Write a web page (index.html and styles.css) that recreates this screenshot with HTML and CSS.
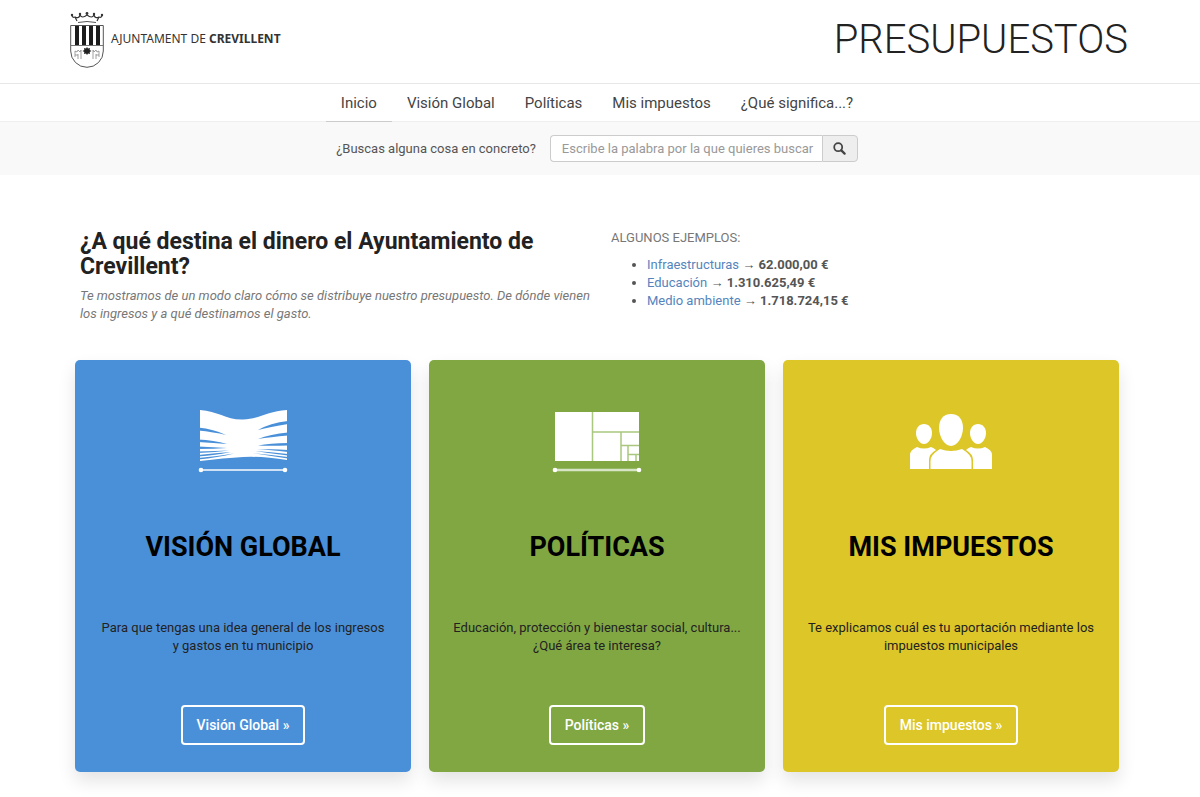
FILE: index.html
```html
<!doctype html>
<html lang="es">
  <head>
    <meta charset="UTF-8" />
    <meta name="viewport" content="width=device-width, initial-scale=1.0" />
    <title>Presupuestos | Ajuntament de Crevillent</title>
    <link rel="stylesheet" href="styles.css">
  </head>

  <body>
    <header>
      <div class="container header-inner">
        <a class="logo" href="#">
          <svg class="shield" viewBox="0 0 34 56" aria-hidden="true">
            <!-- corona -->
            <path d="M7 9 L5 5 Q3 6 2 4 M5 5 Q9 7 10 3 Q12 7 17 3 Q22 7 24 3 Q25 7 29 5 Q31 6 32 4 M29 5 L27 9" fill="none" stroke="#333" stroke-width="1.2" />
            <path d="M8 10.500 Q17 8.500 26 10.500" fill="none" stroke="#555" />
            <g fill="#333">
              <circle cx="2" cy="3" r="1.2" />
              <circle cx="10" cy="2" r="1.2" />
              <circle cx="17" cy="1.5" r="1.4" />
              <circle cx="24" cy="2" r="1.2" />
              <circle cx="32" cy="3" r="1.2" />
            </g>
            <!-- escudo -->
            <path d="M.7 13.5 H33.3 V39 A16.3 16.3 0 0 1 .7 39 Z" fill="#fff" stroke="#555" />
            <path d="M1 33.5 H33" stroke="#777" />
            <path d="M5 14h4v19H5z M12 14h4v19h-4z M19 14h4v19h-4z M26 14h4v19h-4z" fill="#1c1c1c" />
            <path d="M17 35 l1 1.5 2-.6 -.3 2 1.8 1 -1.8 1 .3 2 -2-.5 -1 1.5 -1-1.5 -2 .5 .3-2 -1.8-1 1.8-1 -.3-2 2 .6z" fill="#222" />
            <path d="M5 45 V39 L7 40 L8 38 L10 40 L11 38 V47 M8 47 V42 M5 43 H8 M23 47 V38 L24 40 L26 38 L27 40 L29 39 V45 M26 47 V42 M26 43 H29" fill="none" stroke="#888" stroke-width=".8" />
          </svg>
          <span class="logo-text">AJUNTAMENT DE <b>CREVILLENT</b></span>
        </a>
        <h1 class="site-title">PRESUPUESTOS</h1>
      </div>
    </header>

    <nav class="main-nav">
      <ul class="container">
        <li><a class="active" href="#">Inicio</a></li>
        <li><a href="#">Visión Global</a></li>
        <li><a href="#">Políticas</a></li>
        <li><a href="#">Mis impuestos</a></li>
        <li><a href="#">¿Qué significa...?</a></li>
      </ul>
    </nav>

    <div class="search-bar">
      <form class="container">
        <label for="search">¿Buscas alguna cosa en concreto?</label>
        <div class="input-group">
          <input id="search" type="text" placeholder="Escribe la palabra por la que quieres buscar" />
          <button type="submit" aria-label="Buscar">
            <svg viewBox="0 0 14 14" aria-hidden="true">
              <circle cx="5.6" cy="5.6" r="4.3" fill="none" stroke="#444" stroke-width="1.9" />
              <path d="M9 9 L12.5 12.5" stroke="#444" stroke-width="2.4" stroke-linecap="round" />
            </svg>
          </button>
        </div>
      </form>
    </div>

    <main>
      <div class="container">
        <section class="intro">
          <div class="intro-text">
            <h2>¿A qué destina el dinero el Ayuntamiento de Crevillent?</h2>
            <p>Te mostramos de un modo claro cómo se distribuye nuestro presupuesto. De dónde vienen los ingresos y a qué destinamos el gasto.</p>
          </div>
          <div class="examples">
            <h3>ALGUNOS EJEMPLOS:</h3>
            <ul>
              <li><a href="#">Infraestructuras</a> <span class="arrow">→</span> <b>62.000,00 €</b></li>
              <li><a href="#">Educación</a> <span class="arrow">→</span> <b>1.310.625,49 €</b></li>
              <li><a href="#">Medio ambiente</a> <span class="arrow">→</span> <b>1.718.724,15 €</b></li>
            </ul>
          </div>
        </section>

        <section class="cards">
          <article class="card blue">
            <svg viewBox="0 0 90 64" aria-hidden="true">
              <path d="M2 0 C20 1 28 10 45 9.500 S70 1 89 0 V50 Q64 46 45 47 Q26 48 2 51 Z" fill="#fff" />
              <!-- separación entre las hojas -->
              <g fill="#4a90d9">
                <path d="M0 17.500 Q16 19 28 25 Q16 22 0 20.500 Z" />
                <path d="M0 29.500 Q16 30 29 34 Q16 33 0 32 Z" />
                <path d="M0 36.500 Q16 37 29 38 Q16 39 0 39 Z" />
                <path d="M0 41.500 Q18 41 31 40.500 Q18 42 0 43 Z" />
                <path d="M0 45 Q18 43 33 42 Q18 45 0 46.500 Z" />
                <path d="M0 48 Q20 46 36 43.500 Q20 47.500 0 49.500 Z" />
                <path d="M90 11 Q72 13 60 20 Q72 17 90 14 Z" />
                <path d="M90 22.500 Q72 24 60 29 Q72 27 90 25.500 Z" />
                <path d="M90 33 Q72 33 60 35.500 Q72 36 90 35.500 Z" />
                <path d="M90 40 Q72 39 59 39 Q72 40 90 42 Z" />
                <path d="M90 44 Q72 42 57 41 Q72 43.500 90 45.500 Z" />
                <path d="M90 47 Q72 44.500 54 43 Q72 46 90 48.500 Z" />
              </g>
              <path d="M3 60 H88" stroke="#cfe1f5" stroke-width="2" />
              <circle cx="3" cy="60" r="2.300" fill="#fff" />
              <circle cx="87" cy="60" r="2.300" fill="#fff" />
            </svg>
            <h2>VISIÓN GLOBAL</h2>
            <p>Para que tengas una idea general de los ingresos y gastos en tu municipio</p>
            <a class="btn" href="#">Visión Global »</a>
          </article>

          <article class="card green">
            <svg viewBox="0 0 90 64" aria-hidden="true">
              <path d="M3 2 H87 V51 H3 Z" fill="#fff" />
              <path d="M40.500 2 V51 M41 22 H87 M69 22 V51 M69 35.500 H87 M76 36 V51 M76 44.500 H87 M84 45 V51" fill="none" stroke="#a9c77e" stroke-width="1.500" />
              <path d="M3 60 H87" stroke="#d7e5c6" stroke-width="2.500" />
              <circle cx="3" cy="60" r="2.300" fill="#fff" />
              <circle cx="87" cy="60" r="2.300" fill="#fff" />
            </svg>
            <h2>POLÍTICAS</h2>
            <p>Educación, protección y bienestar social, cultura... ¿Qué área te interesa?</p>
            <a class="btn" href="#">Políticas »</a>
          </article>

          <article class="card yellow">
            <svg viewBox="0 0 90 64" aria-hidden="true">
              <g fill="#fff">
                <path d="M18 14 C23 14 26 18 26 23 C26 29 22 34 18 34 S10 29 10 23 C10 18 13 14 18 14 Z" />
                <path d="M72 14 C77 14 80 18 80 23 C80 29 76 34 72 34 S64 29 64 23 C64 18 67 14 72 14 Z" />
                <path d="M4 59 V45 Q4 40 11 37 Q18 40 25 37 Q28 38 30 40 Q23 44 23 50 V59 Z" />
                <path d="M86 59 V45 Q86 40 79 37 Q72 40 65 37 Q62 38 60 40 Q67 44 67 50 V59 Z" />
                <path d="M45 4 C53 4 57 10 57 18 C57 27 51 36 45 36 S33 27 33 18 C33 10 37 4 45 4 Z" />
                <path d="M24.500 59 V51 Q24 45 34 39 Q45 43 56 39 Q66 45 65.500 51 V59 Z" />
              </g>
            </svg>
            <h2>MIS IMPUESTOS</h2>
            <p>Te explicamos cuál es tu aportación mediante los impuestos municipales</p>
            <a class="btn" href="#">Mis impuestos »</a>
          </article>
        </section>
      </div>
    </main>
  </body>
</html>
```

FILE: styles.css
```css
* {
  box-sizing: border-box;
}
:root {
  --text: #555;
  --line: #e7e7e7;
  --link: #5584bd;
}
body {
  margin: 0;
  background-color: #fff;
  color: var(--text);
  font-family: Roboto, "Liberation Sans", sans-serif;
  font-size: 13px;
  line-height: 18px;
}
h1,
h2,
h3,
p,
ul {
  margin: 0;
  padding: 0;
}
a {
  color: var(--link);
  text-decoration: none;
}
header,
.main-nav,
.search-bar,
main {
  padding-right: 6px;
}
.container {
  max-width: 1062px;
  margin: 0 auto;
}

/* cabecera */
.header-inner {
  display: flex;
  align-items: center;
  justify-content: space-between;
  height: 83px;
  padding: 0 0 3px 4px;
}
.logo {
  display: flex;
  align-items: center;
  gap: 7px;
  color: #333;
  font-family: "Noto Sans", sans-serif;
  font-size: 12px;
}
.logo-text {
  padding-bottom: 3px;
}
.shield {
  width: 34px;
  height: 56px;
}
.site-title {
  color: #222;
  font-size: 40px;
  font-weight: 300;
  line-height: 48px;
}

/* menú */
.main-nav {
  border-top: 1px solid var(--line);
  box-shadow: inset 0 -1px #efefef;
}
.main-nav ul {
  display: flex;
  justify-content: center;
  list-style: none;
}
.main-nav a {
  display: block;
  padding: 9px 15px 8px;
  border-bottom: 1px solid transparent;
  color: #444;
  font-size: 15px;
  line-height: 20px;
}
.main-nav a.active {
  border-bottom-color: #ccc;
}

/* buscador */
.search-bar {
  background-color: #f9f9f9;
}
.search-bar form {
  display: flex;
  align-items: center;
  justify-content: center;
  gap: 14px;
  padding: 13px 0;
}
.input-group {
  display: flex;
  width: 308px;
  height: 27px;
}
.input-group input {
  flex: 1;
  min-width: 0;
  padding: 0 4px 0 11px;
  border: 1px solid #ccc;
  border-right: 0;
  border-radius: 4px 0 0 4px;
  background-color: #fff;
  font: inherit;
}
.input-group input::placeholder {
  color: #999;
}
.input-group button {
  display: flex;
  align-items: center;
  justify-content: center;
  width: 36px;
  padding: 0;
  border: 1px solid #ccc;
  border-radius: 0 4px 4px 0;
  background-color: #eee;
  cursor: pointer;
}
.input-group svg {
  width: 13px;
  height: 13px;
}

/* introducción */
.intro {
  display: grid;
  grid-template-columns: 1fr 1fr;
  padding: 54px 0 37px;
}
.intro-text {
  padding-left: 14px;
}
.intro-text h2 {
  margin-bottom: 8px;
  color: #222;
  font-size: 23px;
  line-height: 25px;
}
.intro-text p {
  color: #777;
  font-style: italic;
}
.examples {
  padding-left: 14px;
}
.examples h3 {
  margin-bottom: 9px;
  color: #777;
  font-size: 13px;
  font-weight: 400;
}
.examples ul {
  padding-left: 36px;
}
.arrow {
  font-family: "Liberation Sans", sans-serif;
}

/* tarjetas */
.cards {
  display: grid;
  grid-template-columns: repeat(3, 1fr);
  gap: 18px;
  padding: 0 9px 25px;
}
.card {
  display: flex;
  flex-direction: column;
  align-items: center;
  padding: 50px 23px 27px;
  border-radius: 5px;
  box-shadow: 0 9px 18px rgba(0, 0, 0, 0.11);
  color: #222;
  text-align: center;
}
.card svg {
  width: 90px;
  height: 64px;
}
.card h2 {
  margin: 56px 0 55px;
  color: #000;
  font-size: 27px;
  line-height: 34px;
}
.card p {
  margin-bottom: 50px;
}
.blue {
  background-color: #4a90d9;
}
.green {
  background-color: #81a742;
}
.yellow {
  background-color: #dcc628;
}
.btn {
  padding: 9px 14px;
  border: 2px solid #fff;
  border-radius: 4px;
  color: #fff;
  font-size: 14px;
  font-weight: 500;
}
```
